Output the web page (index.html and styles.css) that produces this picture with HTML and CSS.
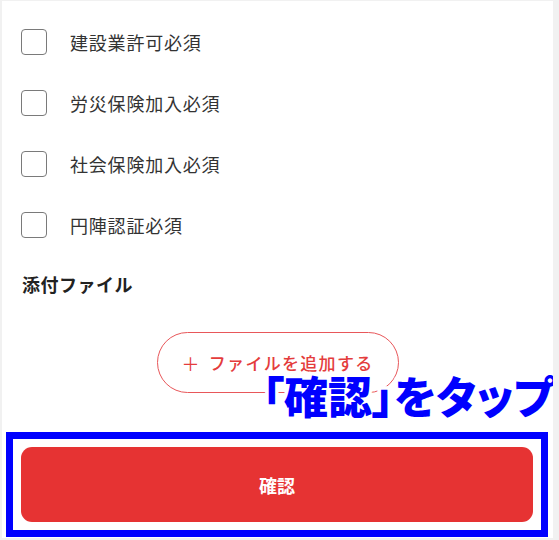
FILE: index.html
```html
<!DOCTYPE html>
<html lang="ja">
<head>
<meta charset="utf-8">
<link rel="stylesheet" href="styles.css">
</head>
<body>
<div class="page">
  <div class="form">
    <label class="check-row"><span class="box"></span><span class="label">建設業許可必須</span></label>
    <label class="check-row"><span class="box"></span><span class="label">労災保険加入必須</span></label>
    <label class="check-row"><span class="box"></span><span class="label">社会保険加入必須</span></label>
    <label class="check-row"><span class="box"></span><span class="label">円陣認証必須</span></label>
    <h2 class="section-title">添付ファイル</h2>
    <div class="add-wrap">
      <button class="add-btn"><span class="plus">＋</span><span class="add-text">ファイルを追加する</span></button>
    </div>
  </div>
  <div class="highlight">
    <button class="confirm-btn">確認</button>
  </div>
  <div class="callout">「確認」をタップ</div>
</div>
</body>
</html>
```
FILE: styles.css
```css
html, body {
  margin: 0;
  padding: 0;
  background: #f1f1f1;
  height: 100%;
}
body {
  font-family: "Noto Sans CJK JP", "Noto Sans", sans-serif;
  color: #333;
}
.page {
  position: relative;
  background: #fff;
  margin: 1px 6px 0 2px;
  height: 537px;
  box-sizing: border-box;
  overflow: hidden;
}
.form {
  padding: 10px 0 0 19px;
}
.check-row {
  display: flex;
  align-items: center;
  height: 61px;
  gap: 23px;
}
.box {
  width: 24px;
  height: 24px;
  border: 1.5px solid #7a7a7a;
  border-radius: 4px;
  flex: none;
}
.label {
  font-size: 18px;
  letter-spacing: 0.8px;
  color: #333;
}
.section-title {
  margin: 16px 0 0 1px;
  font-size: 18px;
  line-height: 26px;
  font-weight: 700;
  letter-spacing: 0.5px;
  color: #222;
}
.add-wrap {
  display: flex;
  justify-content: center;
  margin-top: 35px;
  padding-right: 19px;
}
.add-btn {
  width: 242px;
  height: 61px;
  border: 1px solid #e8575a;
  border-radius: 31px;
  background: #fff;
  color: #e43c3c;
  font-family: inherit;
  font-size: 17px;
  font-weight: 500;
  letter-spacing: 1.3px;
  display: flex;
  align-items: center;
  justify-content: center;
  gap: 8px;
  padding: 0;
}
.plus {
  font-size: 18px;
  font-weight: 400;
}
.highlight {
  margin: 39px 5px 0 4px;
  border: 7px solid #0000ff;
  padding: 8px;
}
.confirm-btn {
  display: block;
  width: 100%;
  height: 75px;
  border: none;
  border-radius: 11px;
  background: #e63333;
  color: #fff;
  font-family: inherit;
  font-size: 18px;
  font-weight: 700;
}
.callout {
  position: absolute;
  left: 260px;
  top: 372px;
  font-size: 44px;
  line-height: 1;
  font-weight: 900;
  color: #0000ff;
  white-space: nowrap;
  font-feature-settings: "palt";
  -webkit-text-stroke: 7px #fff;
  paint-order: stroke fill;
}
```
